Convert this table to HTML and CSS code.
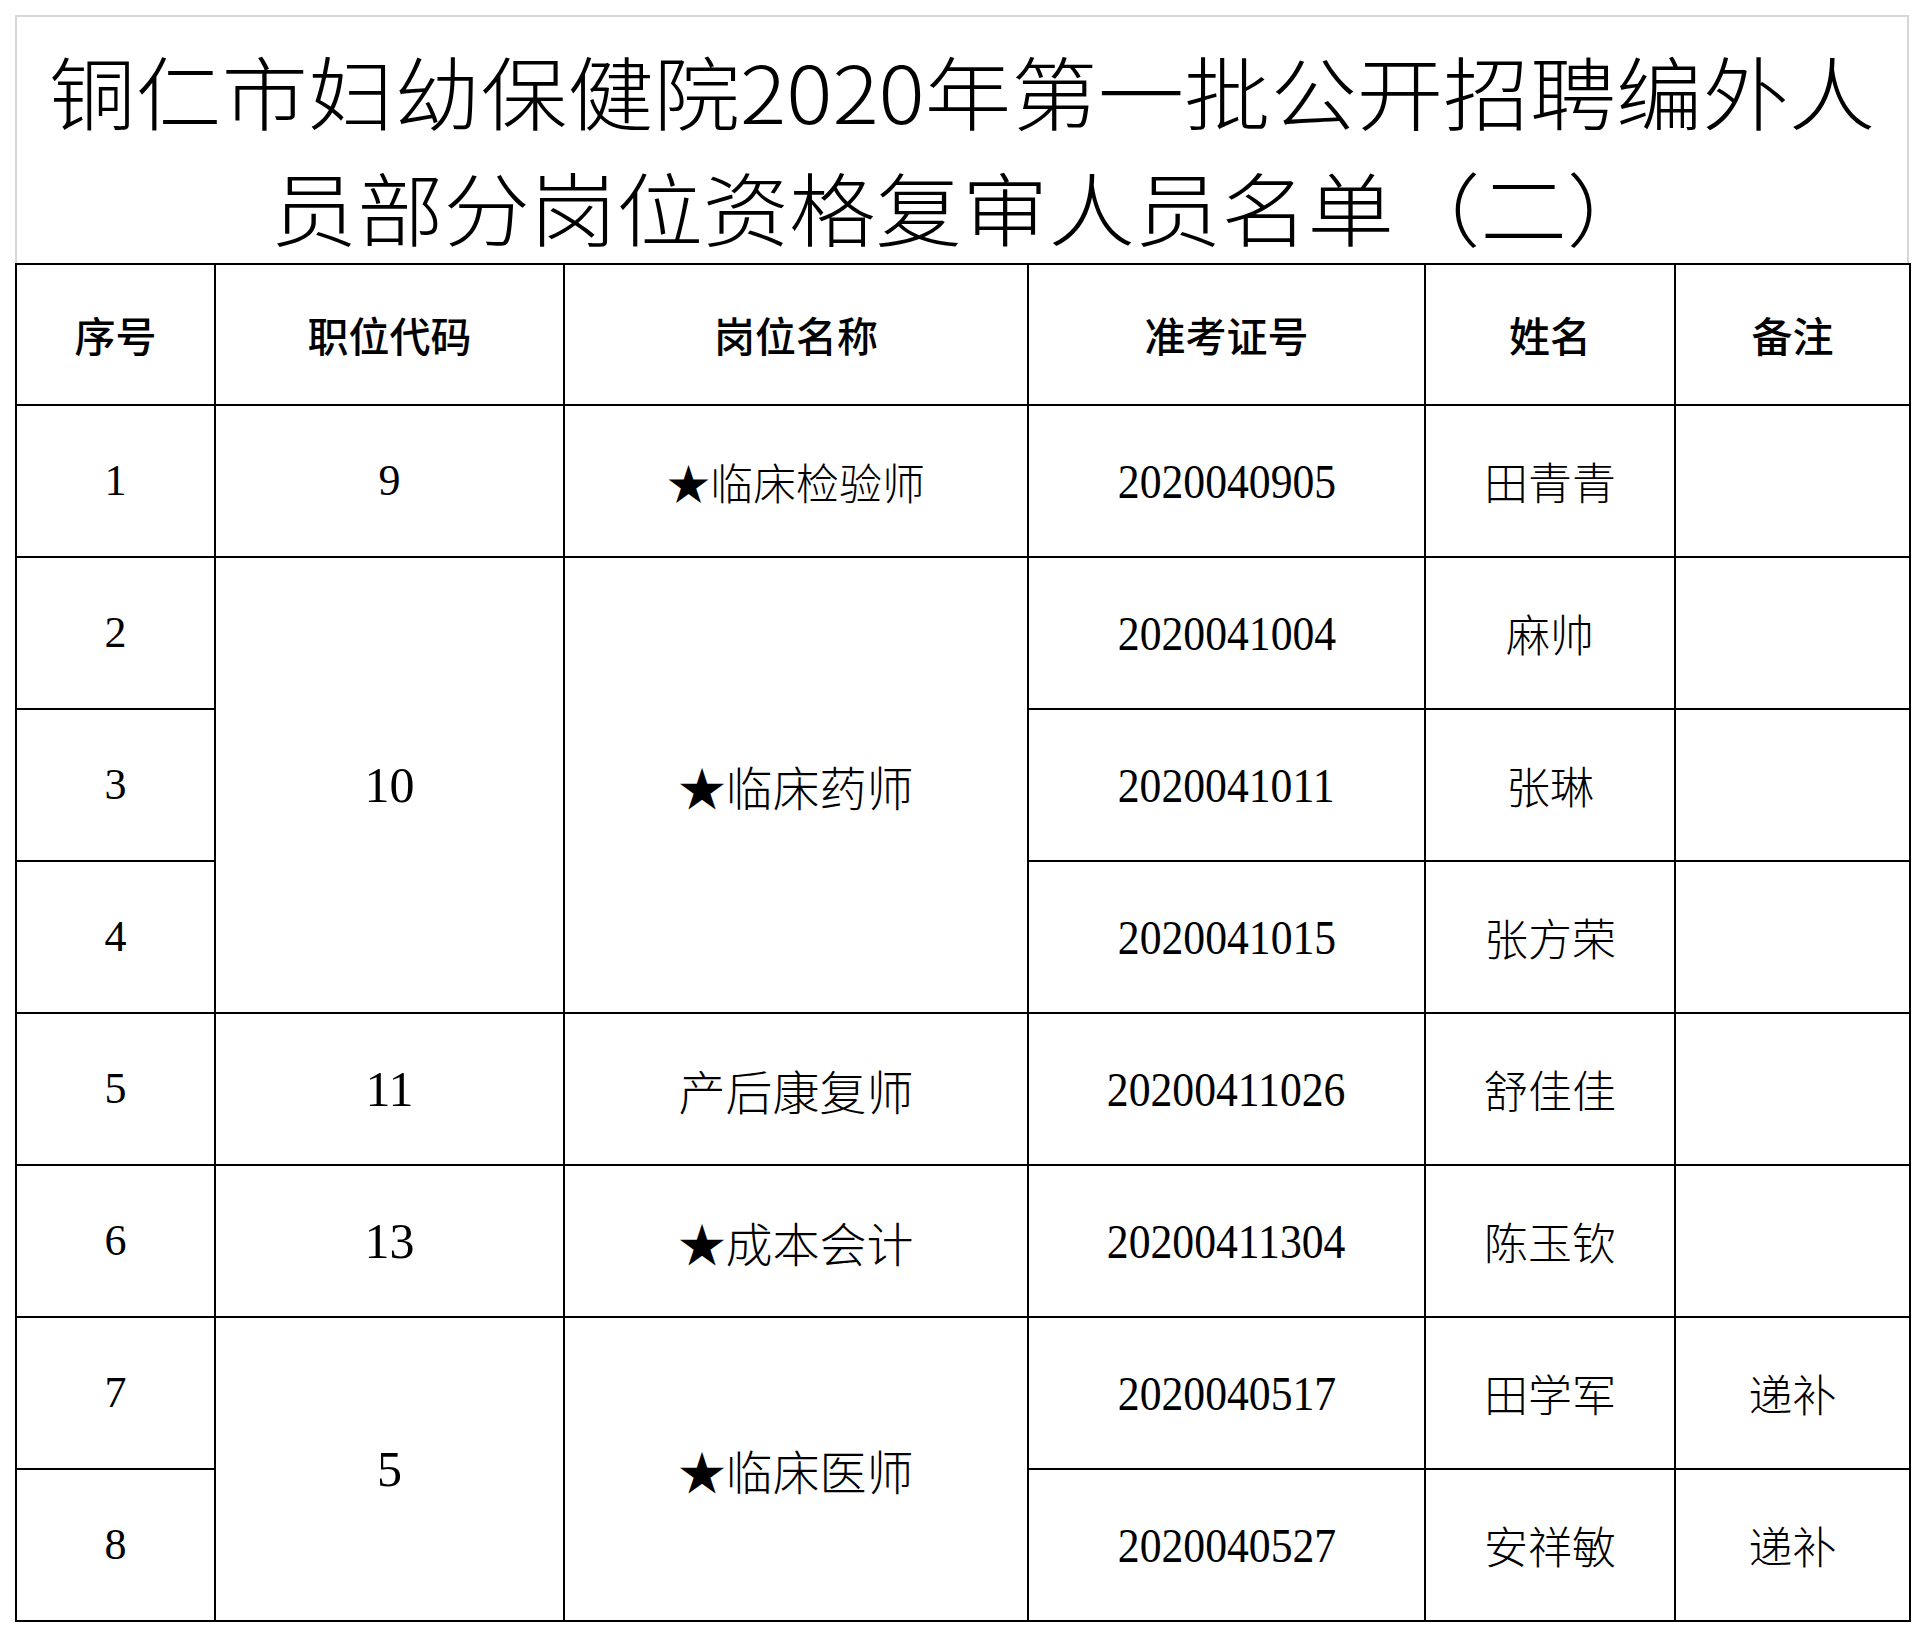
FILE: index.html
```html
<!DOCTYPE html>
<html lang="zh-CN">
<head>
<meta charset="utf-8">
<title>铜仁市妇幼保健院2020年第一批公开招聘编外人员部分岗位资格复审人员名单（二）</title>
<link rel="stylesheet" href="styles.css">
</head>
<body>
<div class="sheet">
  <div class="title">
    <div class="tline">铜仁市妇幼保健院2020年第一批公开招聘编外人</div>
    <div class="tline">员部分岗位资格复审人员名单（二）</div>
  </div>
  <table class="grid">
    <colgroup>
      <col class="c1"><col class="c2"><col class="c3"><col class="c4"><col class="c5"><col class="c6">
    </colgroup>
    <tr class="head">
      <td>序号</td><td>职位代码</td><td>岗位名称</td><td>准考证号</td><td>姓名</td><td>备注</td>
    </tr>
    <tr>
      <td class="num">1</td><td class="num">9</td><td class="post sm">★临床检验师</td>
      <td class="id"><span>2020040905</span></td><td class="name">田青青</td><td></td>
    </tr>
    <tr>
      <td class="num">2</td><td class="num big" rowspan="3">10</td><td class="post" rowspan="3">★临床药师</td>
      <td class="id"><span>2020041004</span></td><td class="name">麻帅</td><td></td>
    </tr>
    <tr>
      <td class="num">3</td>
      <td class="id"><span>2020041011</span></td><td class="name">张琳</td><td></td>
    </tr>
    <tr>
      <td class="num">4</td>
      <td class="id"><span>2020041015</span></td><td class="name">张方荣</td><td></td>
    </tr>
    <tr>
      <td class="num">5</td><td class="num big">11</td><td class="post">产后康复师</td>
      <td class="id"><span>20200411026</span></td><td class="name">舒佳佳</td><td></td>
    </tr>
    <tr>
      <td class="num">6</td><td class="num big">13</td><td class="post">★成本会计</td>
      <td class="id"><span>20200411304</span></td><td class="name">陈玉钦</td><td></td>
    </tr>
    <tr>
      <td class="num">7</td><td class="num big" rowspan="2">5</td><td class="post" rowspan="2">★临床医师</td>
      <td class="id"><span>2020040517</span></td><td class="name">田学军</td><td class="name">递补</td>
    </tr>
    <tr>
      <td class="num">8</td>
      <td class="id"><span>2020040527</span></td><td class="name">安祥敏</td><td class="name">递补</td>
    </tr>
  </table>
</div>
</body>
</html>
```
FILE: styles.css
```css
html, body {
  margin: 0;
  padding: 0;
  background: #ffffff;
}

.sheet {
  margin: 15px 0 0 15px;
  width: 1894px;
}

.title {
  box-sizing: border-box;
  height: 248px;
  border: 2px solid #d6d6d6;
  border-bottom: none;
  padding-top: 14px;
  text-align: center;
  white-space: nowrap;
  font-family: "Noto Sans CJK SC", sans-serif;
  font-size: 80px;
  font-weight: 300;
  color: #000;
}

.tline {
  height: 116px;
  line-height: 116px;
  transform: scaleX(1.08);
}

.grid {
  width: 1894px;
  border-collapse: collapse;
  table-layout: fixed;
  color: #000;
}

.c1 { width: 199px; }
.c2 { width: 349px; }
.c3 { width: 464px; }
.c4 { width: 397px; }
.c5 { width: 250px; }
.c6 { width: 235px; }

.grid td {
  border: 2px solid #000;
  padding: 0;
  text-align: center;
  vertical-align: middle;
  font-family: "Noto Sans CJK SC", sans-serif;
  font-size: 44px;
  font-weight: 300;
  line-height: 1;
}

.grid tr {
  height: 152px;
}

.grid tr.head {
  height: 141px;
}

.grid tr.head td {
  font-size: 41px;
  font-weight: 500;
}

.grid td.num {
  font-family: "Liberation Serif", serif;
  font-weight: 400;
  font-size: 44px;
}

.grid td.num.big {
  font-size: 50px;
}

.grid td.post {
  font-size: 47px;
}

.grid td.post.sm {
  font-size: 43px;
}

.grid td.name {
  font-size: 44px;
}

.grid td.id span {
  display: inline-block;
  font-family: "Liberation Serif", serif;
  font-weight: 400;
  font-size: 48px;
  transform: scaleX(0.91);
}
```
